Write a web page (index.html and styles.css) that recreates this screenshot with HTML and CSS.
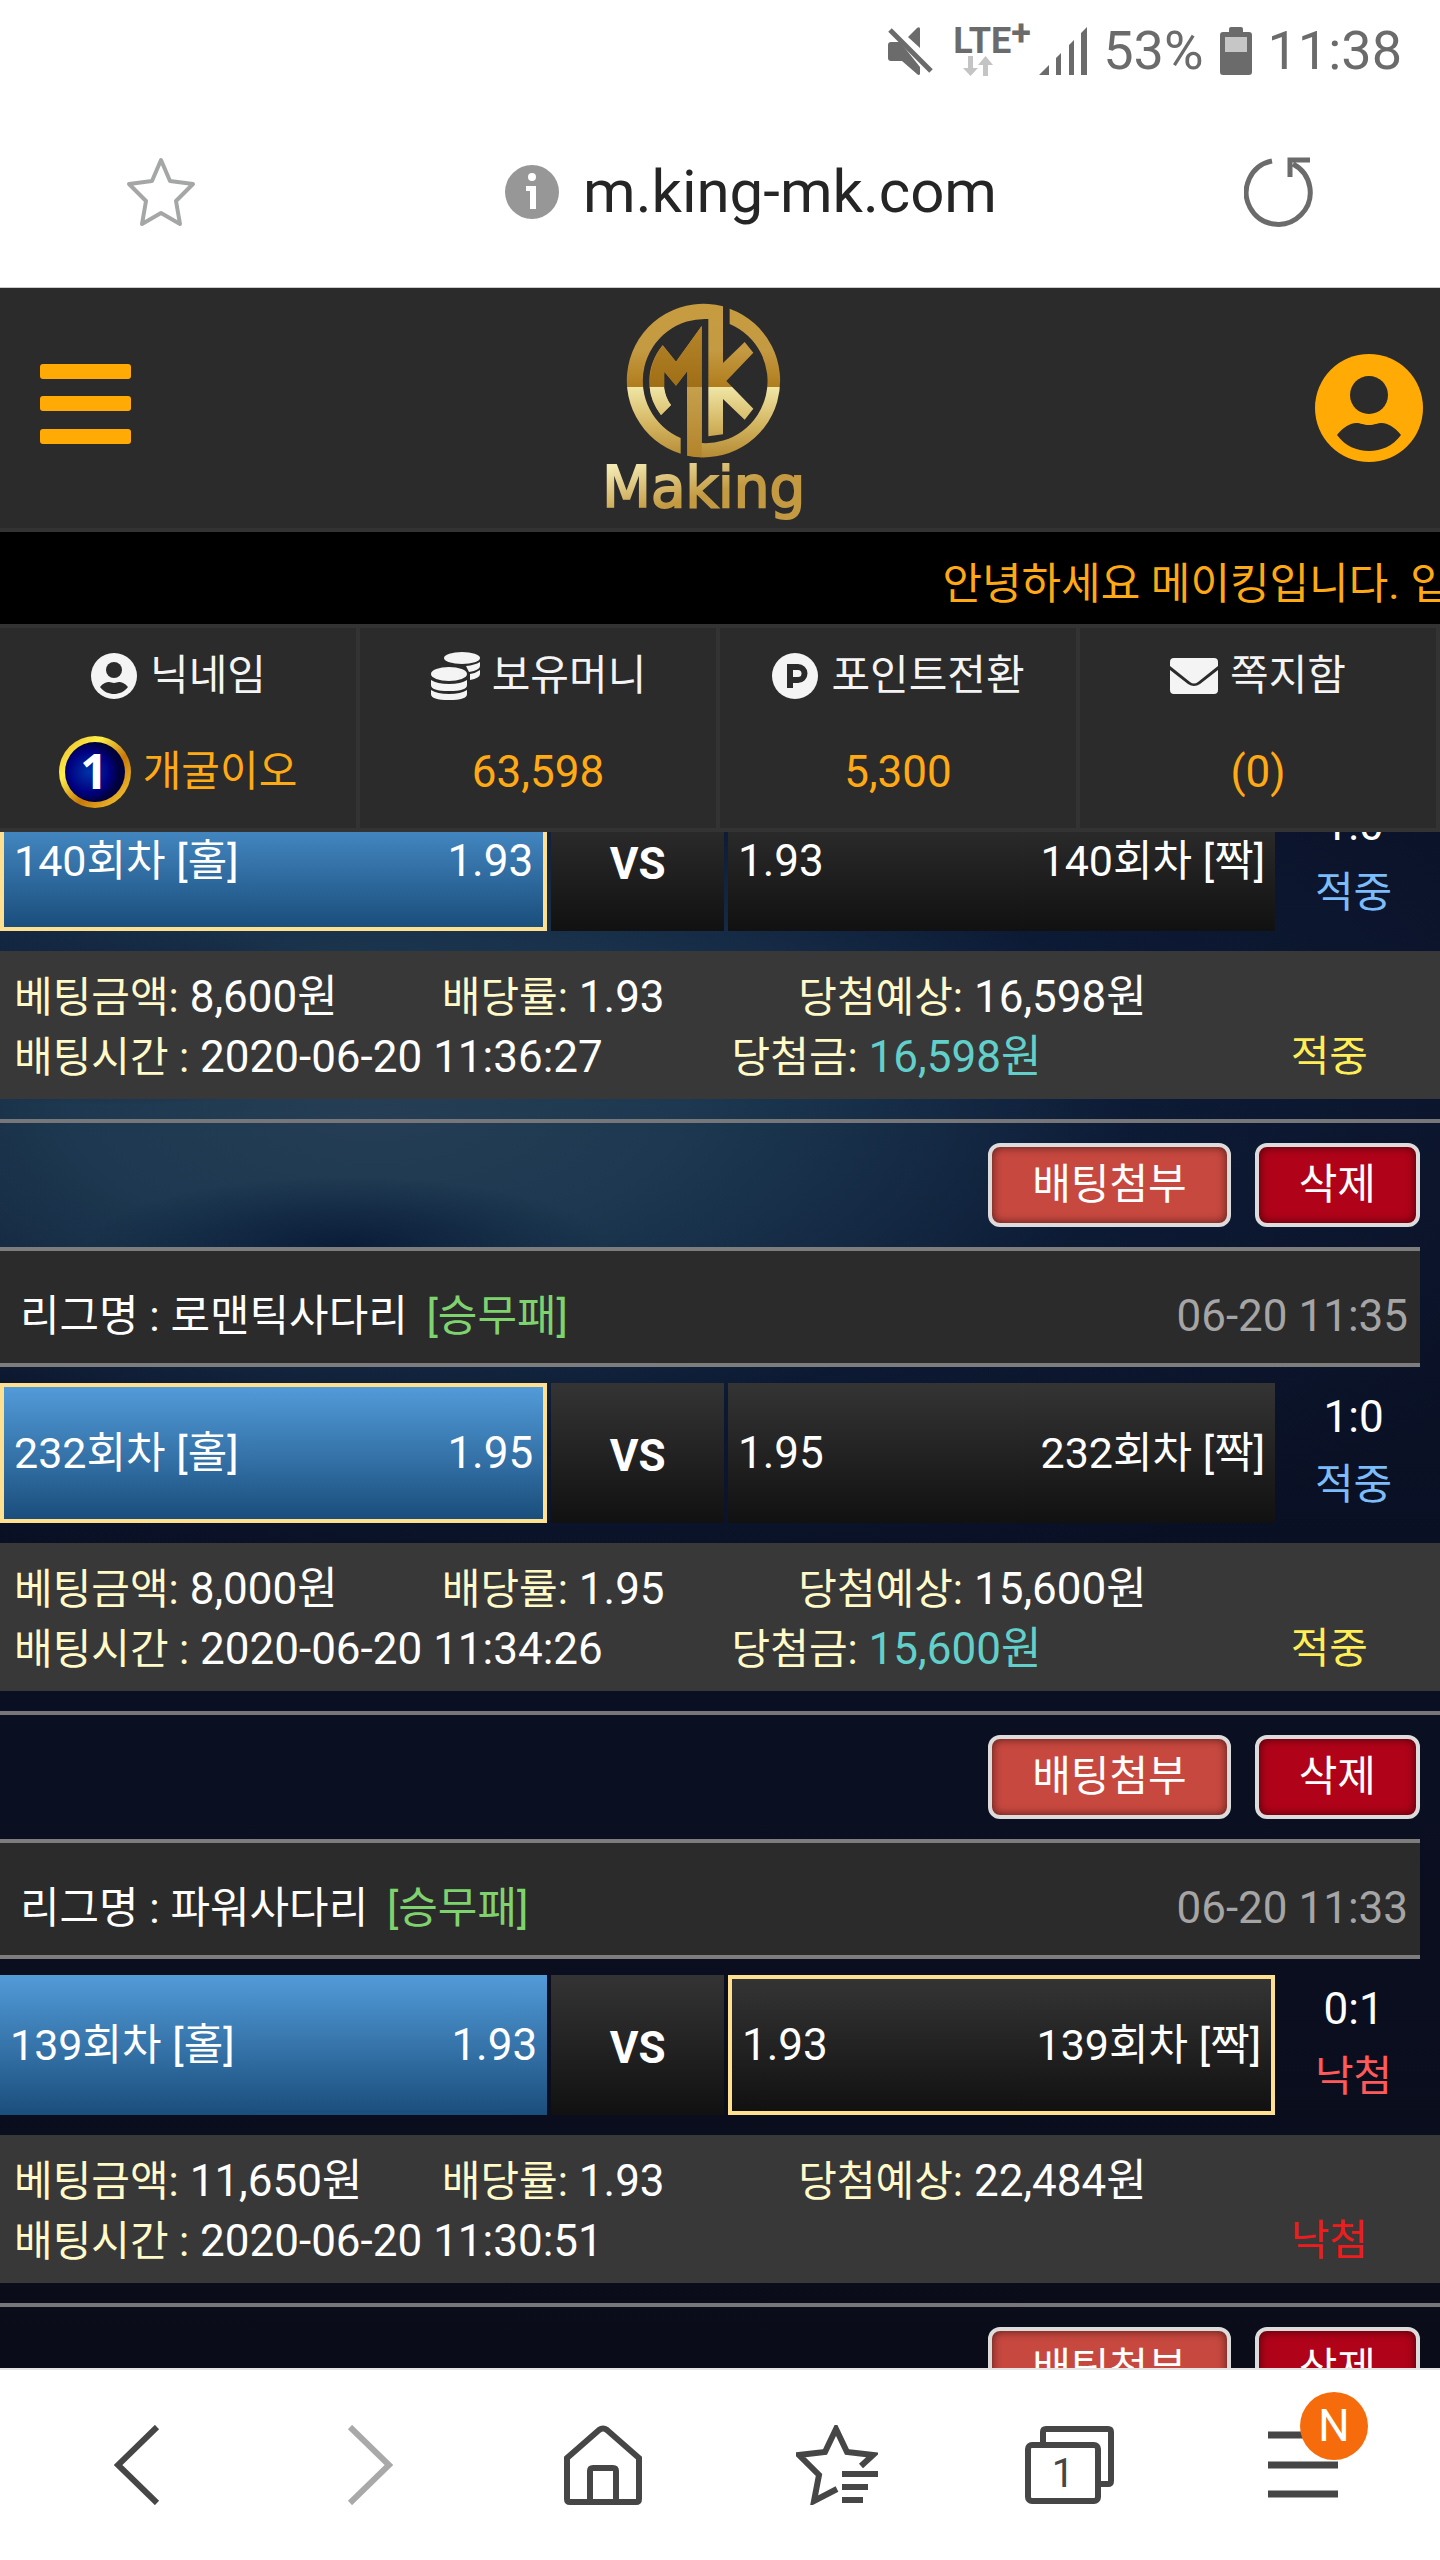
FILE: index.html
```html
<!DOCTYPE html>
<html lang="ko">
<head>
    <meta charset="utf-8">
    <meta name="viewport" content="width=device-width">
    <title>Making</title>
    <link rel="stylesheet" href="styles.css">
</head>
<body>
    <!-- phone status bar -->
    <div class="status-bar">
        <svg class="mute" width="45" height="48" viewBox="0 0 45 48">
            <path d="M0 18q0-3 3-3h9L32 40v7q-1 2-3 0L14 34H3q-3 0-3-3zM20 10L29 1q3-2 3 1v19z"/>
            <path class="mute-slash" d="M2 3L43 44"/>
        </svg>
        <div class="lte">
            <span>LTE<sup>+</sup></span>
            <svg width="30" height="20" viewBox="0 0 30 20"><path d="M5 0h5v12h5l-7.500 8L0 12h5zM20 20h5V9h5l-7.500-9L15 9h5z"/></svg>
        </div>
        <svg class="signal" width="48" height="48" viewBox="0 0 48 48"><path d="M0 48l10-10v10zM17 31l5-5v22h-5zM30 18l5-5v35h-5zM42 6l6-6v48h-6z"/></svg>
        <span>53%</span>
        <svg class="battery" width="32" height="48" viewBox="0 0 32 48">
            <path d="M9 5V2q0-2 2-2h10q2 0 2 2v3h6q3 0 3 3v37q0 3-3 3H3q-3 0-3-3V8q0-3 3-3z"/>
            <path fill="#c6c6c6" d="M5 10h22v15H5z"/>
        </svg>
        <span>11:38</span>
    </div>

    <!-- address bar -->
    <div class="url-bar">
        <button class="plain" aria-label="즐겨찾기">
            <svg width="70" height="70" viewBox="0 0 70 70" fill="none" stroke="#a5a7a7" stroke-width="4" stroke-linejoin="round"><path d="M35 3l9 21 23 3-17 17 4 23-19-11-19 11 4-23L3 27l23-3z"/></svg>
        </button>
        <div class="url">
            <svg width="54" height="54" viewBox="0 0 54 54"><circle cx="27" cy="27" r="27" fill="#979797"/><circle cx="27" cy="12" r="4" fill="#fff"/><path d="M21 21h10v23h-6V26h-4z" fill="#fff"/></svg>
            <span>m.king-mk.com</span>
        </div>
        <button class="plain" aria-label="새로고침">
            <svg width="70" height="70" viewBox="0 0 70 70" fill="none" stroke="#6b6b6b" stroke-width="5"><path d="M28 4A32 32 0 1 0 49 7M46 20V3h20"/></svg>
        </button>
    </div>

    <header class="site-header">
        <button class="plain" aria-label="메뉴">
            <svg width="91" height="88" viewBox="0 0 91 88" fill="#ffaa05"><rect width="91" height="15" rx="3"/><rect y="32" width="91" height="15" rx="3"/><rect y="65" width="91" height="15" rx="3"/></svg>
        </button>
        <a class="logo" href="#" aria-label="Making">
            <svg width="204" height="230" viewBox="126 36 612 690">
                <defs>
                    <linearGradient id="gold" gradientUnits="userSpaceOnUse" x1="0" y1="70" x2="0" y2="530">
                        <stop offset="0" stop-color="#c79c40"/>
                        <stop offset="0.300" stop-color="#c49a42"/>
                        <stop offset="0.540" stop-color="#b07c1c"/>
                        <stop offset="0.540" stop-color="#f0e6a6"/>
                        <stop offset="0.780" stop-color="#d4b661"/>
                        <stop offset="1" stop-color="#b58a34"/>
                    </linearGradient>
                    <linearGradient id="dark" gradientUnits="userSpaceOnUse" x1="0" y1="130" x2="0" y2="530">
                        <stop offset="0" stop-color="#b5852c"/>
                        <stop offset="0.470" stop-color="#a06f15"/>
                        <stop offset="0.470" stop-color="#c6a04c"/>
                        <stop offset="1" stop-color="#b3842b"/>
                    </linearGradient>
                    <linearGradient id="word" gradientUnits="userSpaceOnUse" x1="135" y1="560" x2="175" y2="710">
                        <stop offset="0" stop-color="#f4ebb4"/>
                        <stop offset="1" stop-color="#c39a41"/>
                    </linearGradient>
                </defs>
                <path fill="url(#gold)" d="M359 518A230 230 0 0 1 486 76V246L551 183L577 215L496 300L577 383L551 416L486 354V460L442 466V114A186 186 0 0 0 359 471z"/>
                <path fill="url(#gold)" d="M506 83A230 230 0 0 1 379 524V270L345 314L310 272C305 310 310 345 330 372L300 402C255 340 250 260 305 193L345 242L422 135V486A186 186 0 0 0 506 129z"/>
                <path fill="url(#dark)" d="M379 524V270L345 314L310 272V318H266C266 270 275 230 305 193L345 242L422 135V529z"/>
                <path fill="url(#gold)" d="M266 317H308Q312 350 330 372L300 402Q268 360 266 317z"/>
                <text x="124" y="678" fill="url(#word)" stroke="url(#word)">Making</text>
            </svg>
        </a>
        <button class="plain" aria-label="내 정보">
            <svg width="108" height="108" viewBox="0 0 108 108"><circle cx="54" cy="54" r="54" fill="#ffaa05"/><g fill="#2b2b2b"><circle cx="54" cy="41" r="19"/><path d="M22 81C28 73 36 69 41 69S48 71 54 71 62 69 67 69 80 73 86 81C78 92 66 97 54 97S30 92 22 81z"/></g></svg>
        </button>
    </header>

    <div class="notice"><span>안녕하세요 메이킹입니다. 입</span></div>

    <nav class="account">
        <a href="#">
            <span class="title">
                <svg width="48" height="48" viewBox="0 0 48 48"><circle cx="24" cy="24" r="23"/><g fill="#2b2b2b"><circle cx="24" cy="18" r="8"/><path d="M10 35C13 31 17 30 19 30S22 31 24 31 27 30 29 30 35 31 38 35C34 40 29 42 24 42S14 40 10 35z"/></g></svg>
                닉네임
            </span>
            <span class="value">
                <svg width="72" height="72" viewBox="0 0 72 72">
                    <defs>
                        <radialGradient id="level" cx="0.400" cy="0.500" r="0.500"><stop offset="0" stop-color="#0033a8"/><stop offset="0.700" stop-color="#000080"/><stop offset="1" stop-color="#00003c"/></radialGradient>
                        <linearGradient id="rim" x1="0" y1="0" x2="1" y2="1"><stop offset="0" stop-color="#e8b020"/><stop offset="0.300" stop-color="#fff04a"/><stop offset="0.600" stop-color="#c87808"/><stop offset="1" stop-color="#ffd83a"/></linearGradient>
                    </defs>
                    <circle cx="36" cy="36" r="36" fill="url(#rim)"/>
                    <circle cx="36" cy="36" r="30" fill="url(#level)"/>
                    <text class="level" x="35" y="53" text-anchor="middle">1</text>
                </svg>
                개굴이오
            </span>
        </a>
        <a href="#">
            <span class="title">
                <svg width="50" height="48" viewBox="0 0 50 48">
                    <ellipse cx="32" cy="6" rx="18" ry="6"/>
                    <path d="M36 14q9-1 14-4v4q0 4-11 6zM40 22q6-1 10-4v4q0 4-10 6z"/>
                    <ellipse cx="19" cy="22" rx="18" ry="7"/>
                    <path d="M1 28q6 4 18 4t18-4v5q0 6-18 6T1 33zM1 38q6 4 18 4t18-4v4q0 6-18 6T1 42z"/>
                </svg>
                보유머니
            </span>
            <span class="value">63,598</span>
        </a>
        <a href="#">
            <span class="title">
                <svg width="48" height="48" viewBox="0 0 48 48"><circle cx="24" cy="24" r="23"/><path fill="none" stroke="#2b2b2b" stroke-width="6" d="M19 36V15h8a6 6 0 0 1 0 13h-8"/></svg>
                포인트전환
            </span>
            <span class="value">5,300</span>
        </a>
        <a href="#">
            <span class="title">
                <svg width="48" height="36" viewBox="0 0 48 36"><path d="M4 0h40q4 0 4 4v4L28 24q-4 3-8 0L0 8V4q0-4 4-4z"/><path d="M0 12l18 14q6 4 12 0l18-14v20q0 4-4 4H4q-4 0-4-4z"/></svg>
                쪽지함
            </span>
            <span class="value">(0)</span>
        </a>
    </nav>

    <main class="history">
        <div class="slips">
            <article class="slip">
                <div class="match">
                    <div class="team home picked"><span class="name">140회차 [홀]</span><span>1.93</span></div>
                    <div class="vs">VS</div>
                    <div class="team"><span>1.93</span><span class="name">140회차 [짝]</span></div>
                    <div class="result"><span>1:0</span><span class="hit">적중</span></div>
                </div>
                <div class="summary">
                    <div class="line amounts">
                        <span><label>베팅금액:</label> 8,600원</span>
                        <span><label>배당률:</label> 1.93</span>
                        <span><label>당첨예상:</label> 16,598원</span>
                    </div>
                    <div class="line times">
                        <span><label>배팅시간 :</label> 2020-06-20 11:36:27</span>
                        <span class="won"><label>당첨금:</label> 16,598원</span>
                        <span class="state">적중</span>
                    </div>
                </div>
            </article>

            <article class="slip">
                <div class="actions">
                    <button class="btn attach">배팅첨부</button>
                    <button class="btn delete">삭제</button>
                </div>
                <div class="league">
                    <span class="league-name">리그명 : 로맨틱사다리 <em>[승무패]</em></span>
                    <time>06-20 11:35</time>
                </div>
                <div class="match">
                    <div class="team home picked"><span class="name">232회차 [홀]</span><span>1.95</span></div>
                    <div class="vs">VS</div>
                    <div class="team"><span>1.95</span><span class="name">232회차 [짝]</span></div>
                    <div class="result"><span>1:0</span><span class="hit">적중</span></div>
                </div>
                <div class="summary">
                    <div class="line amounts">
                        <span><label>베팅금액:</label> 8,000원</span>
                        <span><label>배당률:</label> 1.95</span>
                        <span><label>당첨예상:</label> 15,600원</span>
                    </div>
                    <div class="line times">
                        <span><label>배팅시간 :</label> 2020-06-20 11:34:26</span>
                        <span class="won"><label>당첨금:</label> 15,600원</span>
                        <span class="state">적중</span>
                    </div>
                </div>
            </article>

            <article class="slip">
                <div class="actions">
                    <button class="btn attach">배팅첨부</button>
                    <button class="btn delete">삭제</button>
                </div>
                <div class="league">
                    <span class="league-name">리그명 : 파워사다리 <em>[승무패]</em></span>
                    <time>06-20 11:33</time>
                </div>
                <div class="match">
                    <div class="team home"><span class="name">139회차 [홀]</span><span>1.93</span></div>
                    <div class="vs">VS</div>
                    <div class="team picked"><span>1.93</span><span class="name">139회차 [짝]</span></div>
                    <div class="result"><span>0:1</span><span class="miss">낙첨</span></div>
                </div>
                <div class="summary">
                    <div class="line amounts">
                        <span><label>베팅금액:</label> 11,650원</span>
                        <span><label>배당률:</label> 1.93</span>
                        <span><label>당첨예상:</label> 22,484원</span>
                    </div>
                    <div class="line times">
                        <span><label>배팅시간 :</label> 2020-06-20 11:30:51</span>
                        <span></span>
                        <span class="state lost">낙첨</span>
                    </div>
                </div>
            </article>

            <article class="slip">
                <div class="actions">
                    <button class="btn attach">배팅첨부</button>
                    <button class="btn delete">삭제</button>
                </div>
            </article>
        </div>
    </main>

    <!-- browser toolbar -->
    <nav class="toolbar">
        <button class="plain" aria-label="뒤로"><svg width="46" height="80" viewBox="0 0 46 80"><path d="M43 2L4 40l39 38"/></svg></button>
        <button class="plain" aria-label="앞으로"><svg class="off" width="46" height="80" viewBox="0 0 46 80"><path d="M3 2l39 38L3 78"/></svg></button>
        <button class="plain" aria-label="홈"><svg width="80" height="80" viewBox="0 0 80 80"><path d="M4 33L36 5q4-3 8 0l32 28v41q0 3-3 3H7q-3 0-3-3zM27 77V46q0-3 3-3h20q3 0 3 3v31"/></svg></button>
        <button class="plain" aria-label="북마크"><svg width="82" height="80" viewBox="0 0 82 80"><path d="M41 64L18 76l5-26L3 30l26-3L40 4l11 23 26 3-12 11M46 49h36M46 62h26M46 75h21"/></svg></button>
        <button class="plain" aria-label="탭 1개"><svg width="90" height="78" viewBox="0 0 90 78"><path d="M18 17V6q0-3 3-3h62q3 0 3 3v49q0 3-3 3H73"/><rect x="3" y="19" width="70" height="56" rx="4"/><text x="38" y="61" text-anchor="middle">1</text></svg></button>
        <button class="plain menu" aria-label="메뉴"><svg width="70" height="72" viewBox="0 0 70 72"><path d="M0 6h70M0 36h70M0 65h70" stroke-width="7"/></svg><span class="badge">N</span></button>
    </nav>
</body>
</html>
```
FILE: styles.css
```css
* {
    box-sizing: border-box;
}
body {
    margin: 0;
    height: 100vh;
    display: flex;
    flex-direction: column;
    overflow: hidden;
    background: #fff;
    color: #fff;
    font-family: Roboto, "Noto Sans CJK KR", sans-serif;
    font-size: 44px;
    line-height: 60px;
}
svg {
    display: block;
    flex: none;
}
a {
    color: inherit;
    text-decoration: none;
}
button {
    font-family: inherit;
    cursor: pointer;
}
.plain {
    padding: 0;
    border: none;
    background: none;
}

/* status bar */
.status-bar {
    display: flex;
    flex: none;
    align-items: center;
    justify-content: flex-end;
    height: 96px;
    padding: 6px 38px 0 0;
    color: #6b6b6b;
    font-size: 54px;
}
.status-bar svg {
    fill: #6b6b6b;
}
.status-bar .mute {
    margin-right: 20px;
}
.mute-slash {
    stroke: #6b6b6b;
    stroke-width: 5;
}
.lte {
    display: flex;
    flex-direction: column;
    width: 76px;
    margin-right: 10px;
    font-size: 36px;
    font-weight: bold;
    line-height: 30px;
}
.lte sup {
    font-size: 36px;
    line-height: 0;
    vertical-align: 8px;
}
.lte svg {
    margin-left: 10px;
    fill: #c4c4c4;
}
.signal {
    margin-right: 16px;
}
.battery {
    margin: 0 16px;
}

/* address bar */
.url-bar {
    display: flex;
    flex: none;
    align-items: center;
    justify-content: space-between;
    height: 192px;
    padding: 0 126px;
    border-bottom: 1px solid #ccc;
    color: #252525;
    font-size: 60px;
}
.url {
    display: flex;
    align-items: center;
    gap: 24px;
    margin-right: -62px;
}

/* site header */
.site-header {
    display: flex;
    flex: none;
    align-items: center;
    justify-content: space-between;
    height: 244px;
    padding: 0 17px 0 40px;
    border-bottom: 4px solid #333;
    background: #2b2b2b;
}
.logo {
    margin-right: 36px;
}
.logo text {
    font-family: "DejaVu Sans", sans-serif;
    font-size: 169px;
    stroke-width: 6;
}
.notice {
    flex: none;
    overflow: hidden;
    height: 92px;
    padding-left: calc(66% - 8px);
    background: #000;
    color: #ffa914;
    font-size: 43px;
    line-height: 104px;
    white-space: nowrap;
}
.account {
    display: grid;
    flex: none;
    grid-template-columns: repeat(4, 1fr);
    border-top: 4px solid #333;
    border-bottom: 4px solid #333;
    background: #2b2b2b;
}
.account a {
    padding-bottom: 8px;
    border-right: 4px solid #333;
}
.title,
.value {
    display: flex;
    align-items: center;
    justify-content: center;
    gap: 12px;
    height: 96px;
}
.title {
    color: #f4f4f4;
    font-size: 42px;
}
.title svg {
    fill: #f4f4f4;
}
.value {
    color: #ffa914;
}
.account a:first-child .value {
    font-size: 42px;
}
.level {
    fill: #fff;
    font-family: "Open Sans", sans-serif;
    font-size: 48px;
    font-weight: bold;
}

/* betting history */
.history {
    flex: 1 1 0;
    min-height: 0;
    overflow: hidden;
    background:
        radial-gradient(ellipse 300px 90px at 8% 12%, #0a1730 0%, transparent 100%),
        radial-gradient(ellipse 260px 70px at 24% 27%, #0a1c38 0%, transparent 100%),
        radial-gradient(ellipse 760px 330px at 26% 18%, #253e56 0%, #1d3850 40%, transparent 100%),
        radial-gradient(ellipse 1100px 500px at 40% 18%, #0f2444 0%, transparent 100%),
        linear-gradient(#0b1228, #0a1024 50%, #0a0c19);
}
/* list is scrolled part way through the first slip */
.slips {
    margin-top: -41px;
}
.slip {
    padding-bottom: 20px;
    border-bottom: 4px solid #77777a;
}
.actions {
    display: flex;
    justify-content: flex-end;
    gap: 24px;
    padding: 20px 20px 20px 0;
}
.btn {
    height: 84px;
    padding: 0 40px;
    border: 4px solid #dcdcdc;
    border-radius: 12px;
    box-shadow: inset 0 0 10px rgba(0,0,0,0.6);
    color: #fff;
    font-size: 42px;
    line-height: 76px;
}
.attach {
    background: #c7483f;
}
.delete {
    background: #b00319;
}
.league {
    display: flex;
    align-items: center;
    justify-content: space-between;
    height: 120px;
    margin: 0 20px 16px 0;
    padding: 18px 12px 0 20px;
    border-top: 4px solid #7d7d7d;
    border-bottom: 4px solid #7d7d7d;
    background: #2b2b2b;
}
.league-name {
    font-size: 43px;
}
.league em {
    margin-left: 8px;
    color: #7fd36f;
    font-style: normal;
}
.league time {
    color: #a5a5a5;
}
.match {
    display: grid;
    grid-template-columns: 38% 12% 38% 1fr;
    gap: 4px;
    height: 140px;
    margin-bottom: 20px;
}
.team,
.vs {
    display: flex;
    align-items: center;
    justify-content: space-between;
    padding: 0 10px;
    background: linear-gradient(#343434, #111);
}
.team.home {
    background: linear-gradient(#529bd9, #1a4e7c);
}
.team.picked {
    border: 4px solid #ffe08f;
}
.name {
    font-size: 43px;
}
.vs {
    justify-content: center;
    padding-top: 6px;
    font-weight: bold;
}
.result {
    display: flex;
    flex-direction: column;
    padding-right: 12px;
    line-height: 68px;
    text-align: center;
}
.hit,
.miss {
    font-size: 42px;
}
.hit {
    color: #7cbcfa;
}
.miss {
    color: #ff5a5a;
}
.summary {
    padding: 16px 0 12px 14px;
    background: #383838;
}
.line {
    display: grid;
    height: 60px;
}
.amounts {
    grid-template-columns: 30% 25% 1fr;
}
.times {
    grid-template-columns: 53% 1fr auto;
    padding-right: 72px;
}
.summary label {
    color: #fffac8;
    font-size: 42px;
}
.won {
    color: #62d0ca;
}
.state {
    color: #ffee55;
    font-size: 42px;
}
.state.lost {
    color: #ee1c1c;
}

/* browser toolbar */
.toolbar {
    display: grid;
    flex: none;
    grid-template-columns: repeat(6, 1fr);
    height: 192px;
    padding: 0 20px;
    border-top: 2px solid #e5e5e5;
    background: #fff;
}
.toolbar .plain {
    display: flex;
    align-items: center;
    justify-content: center;
}
.toolbar svg {
    fill: none;
    stroke: #464646;
    stroke-width: 6;
}
.toolbar .off {
    stroke: #a9a9a9;
}
.toolbar text {
    fill: #464646;
    stroke: none;
    font-size: 40px;
}
.toolbar .menu {
    position: relative;
}
.badge {
    position: absolute;
    top: 22px;
    right: 52px;
    width: 68px;
    height: 68px;
    border-radius: 50%;
    background: #f66c0c;
    color: #fff;
    font-size: 44px;
    line-height: 68px;
}
```
